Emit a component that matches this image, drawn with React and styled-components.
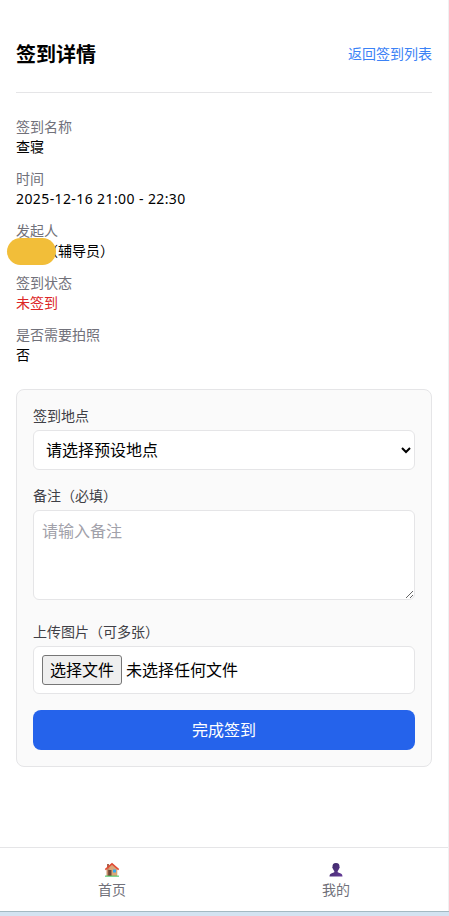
import React from "react";
import styled, { createGlobalStyle } from "styled-components";

const GlobalStyle = createGlobalStyle`
  *, *::before, *::after { box-sizing: border-box; }
  body {
    margin: 0;
    background: #fff;
    color: #000;
    font-family: "Noto Sans", "Noto Sans CJK SC", sans-serif;
    font-size: 16px;
    line-height: 24px;
  }
  button, select, textarea { font: inherit; }
`;

const Screen = styled.div`
  display: flex;
  flex-direction: column;
  height: 916px;
  overflow: hidden;
`;

const Page = styled.div`
  flex: 1;
  display: flex;
  flex-direction: column;
  border-right: 1px solid #f0f0f1;
`;

const Main = styled.main`
  flex: 1;
  padding: 16px 16px 0;
`;

const Header = styled.header`
  display: flex;
  align-items: center;
  justify-content: space-between;
  height: 77px;
  border-bottom: 1px solid #e5e5e7;
`;

const Title = styled.h1`
  margin: 0;
  padding-top: 2px;
  font-size: 20px;
  line-height: 28px;
  font-weight: 700;
`;

const BackLink = styled.a`
  color: #3b82f6;
  font-size: 14px;
  line-height: 20px;
  text-decoration: none;
`;

const Details = styled.dl`
  display: flex;
  flex-direction: column;
  gap: 12px;
  margin: 24px 0;
  font-size: 14px;
  line-height: 20px;
`;

const Term = styled.dt`
  color: #71717a;
`;

const Value = styled.dd`
  position: relative;
  height: 20px;
  margin: 0;
  padding-left: ${({ $masked }) => ($masked ? "28px" : "0")};
  color: ${({ $danger }) => ($danger ? "#dc2626" : "#000")};
  letter-spacing: ${({ $numeric }) => ($numeric ? "0.4px" : "normal")};
`;

const NameMask = styled.span`
  position: absolute;
  left: -9px;
  top: -3px;
  width: 49px;
  height: 27px;
  border-radius: 13.5px;
  background: #f2be39;
`;

const Card = styled.form`
  display: flex;
  flex-direction: column;
  gap: 16px;
  padding: 16px;
  border: 1px solid #e5e5e7;
  border-radius: 8px;
  background: #fafafa;
`;

const Field = styled.div`
  display: flex;
  flex-direction: column;
  gap: 4px;
  padding-bottom: ${({ $spaced }) => ($spaced ? "6px" : "0")};
`;

const Label = styled.label`
  height: 20px;
  color: #3f3f46;
  font-size: 14px;
  line-height: 20px;
`;

const Select = styled.select`
  height: 40px;
  padding: 0 0 0 8px;
  border: 1px solid #e5e5e7;
  border-radius: 6px;
  background: #fff;
  color: #000;
`;

const Textarea = styled.textarea`
  display: block;
  height: 90px;
  padding: 8px;
  border: 1px solid #e5e5e7;
  border-radius: 6px;
  background: #fff;
  &::placeholder { color: #a1a1aa; }
`;

const FileBox = styled.div`
  display: flex;
  align-items: center;
  gap: 4px;
  height: 48px;
  padding: 8px;
  border: 1px solid #e5e5e7;
  border-radius: 6px;
  background: #fff;
`;

const FileButton = styled.button`
  width: 80px;
  height: 30px;
  padding: 0;
  border: 1px solid #767676;
  border-radius: 3px;
  background: #efefef;
  color: #000;
`;

const Submit = styled.button`
  height: 40px;
  padding: 0;
  border: 0;
  border-radius: 8px;
  background: #2563eb;
  color: #fff;
`;

const Nav = styled.nav`
  display: grid;
  grid-template-columns: 1fr 1fr;
  height: 64px;
  border-top: 1px solid #e5e5e7;
`;

const NavItem = styled.a`
  display: flex;
  flex-direction: column;
  align-items: center;
  padding-top: 14px;
  gap: 2px;
  color: #71717a;
  font-size: 14px;
  line-height: 20px;

  svg { display: block; }
`;

const BottomStrip = styled.div`
  height: 5px;
  border-top: 1px solid #a3b9c2;
  background: #d3e3f1;
`;

const HouseIcon = () => (
  <svg width="16" height="16" viewBox="0 0 16 16">
    <path d="M3 2h2v4H3z" fill="#a9654d" />
    <path d="M2.7 7 8 2.5 13.3 7v7H2.7z" fill="#d9a779" />
    <path d="M2.7 7.5 5.3 5v9H2.7z" fill="#c48a68" />
    <path d="M4.2 8h3.3v6H4.2z" fill="#704638" />
    <path d="M9 7.5h3v3H9z" fill="#36aaf0" />
    <path d="M1.3 7.6 8 1.9l6.7 5.7" fill="none" stroke="#e04b35" strokeWidth="1.6" />
    <path d="M1 13.6h14v1.1H1z" fill="#4cc568" />
  </svg>
);

const PersonIcon = () => (
  <svg width="16" height="16" viewBox="0 0 16 16">
    <defs>
      <linearGradient id="person" x2="1" y2="1">
        <stop stopColor="#392763" />
        <stop offset="1" stopColor="#653b98" />
      </linearGradient>
    </defs>
    <path
      d="M8 1C5.3 1 4.4 2.6 4.5 4.7c-.5.3-.1 1.6.4 1.8.3 1.3.9 2 1.4 2.5v1.2L3.2 11.4C1.9 12 1.5 13.1 1.5 14.6h13c0-1.5-.4-2.6-1.7-3.2L9.7 10.2V9c.5-.5 1.1-1.2 1.4-2.5.5-.2.9-1.5.4-1.8C11.6 2.6 10.7 1 8 1z"
      fill="url(#person)"
    />
  </svg>
);

const details = [
  { term: "签到名称", value: "查寝" },
  { term: "时间", value: "2025-12-16 21:00 - 22:30", numeric: true },
  { term: "发起人", value: "（辅导员）", masked: true },
  { term: "签到状态", value: "未签到", danger: true },
  { term: "是否需要拍照", value: "否" },
];

export default function App() {
  return (
    <Screen>
      <GlobalStyle />
      <Page>
        <Main>
          <Header>
            <Title>签到详情</Title>
            <BackLink>返回签到列表</BackLink>
          </Header>
          <Details>
            {details.map(({ term, value, masked, danger, numeric }) => (
              <div key={term}>
                <Term>{term}</Term>
                <Value $masked={masked} $danger={danger} $numeric={numeric}>
                  {value}
                  {masked && <NameMask />}
                </Value>
              </div>
            ))}
          </Details>
          <Card>
            <Field>
              <Label htmlFor="place">签到地点</Label>
              <Select id="place">
                <option>请选择预设地点</option>
              </Select>
            </Field>
            <Field $spaced>
              <Label htmlFor="remark">备注（必填）</Label>
              <Textarea id="remark" placeholder="请输入备注" />
            </Field>
            <Field>
              <Label>上传图片（可多张）</Label>
              <FileBox>
                <FileButton type="button">选择文件</FileButton>
                <span>未选择任何文件</span>
              </FileBox>
            </Field>
            <Submit type="button">完成签到</Submit>
          </Card>
        </Main>
        <Nav>
          <NavItem>
            <HouseIcon />
            <span>首页</span>
          </NavItem>
          <NavItem>
            <PersonIcon />
            <span>我的</span>
          </NavItem>
        </Nav>
      </Page>
      <BottomStrip />
    </Screen>
  );
}
